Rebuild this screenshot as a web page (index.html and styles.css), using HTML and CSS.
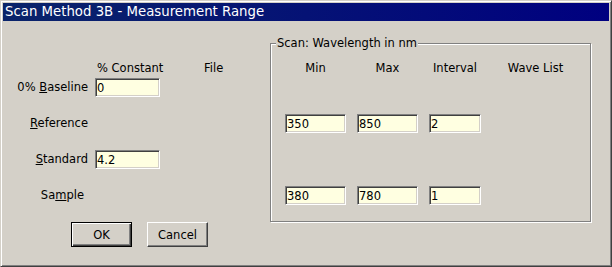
FILE: index.html
```html
<!DOCTYPE html>
<html>
<head>
<meta charset="utf-8">
<link rel="stylesheet" href="styles.css">
</head>
<body>
<div class="window">
  <div class="titlebar">Scan Method 3B - Measurement Range</div>
  <div class="content">
    <div class="left">
      <div class="grid">
        <div class="hdr hdr-const">% Constant</div>
        <div class="hdr hdr-file">File</div>

        <div class="lbl"><span>0% <u>B</u>aseline</span></div>
        <div class="cell"><input class="field w65" type="text" value="0"></div>
        <div class="cell"></div>

        <div class="lbl"><span><u>R</u>eference</span></div>
        <div class="cell"></div>
        <div class="cell"></div>

        <div class="lbl"><span><u>S</u>tandard</span></div>
        <div class="cell"><input class="field w65" type="text" value="4.2"></div>
        <div class="cell"></div>

        <div class="lbl lbl-sample"><span>Sa<u>m</u>ple</span></div>
        <div class="cell"></div>
        <div class="cell"></div>
      </div>
      <div class="buttons">
        <button class="btn btn-default">OK</button>
        <button class="btn">Cancel</button>
      </div>
    </div>
    <fieldset class="group">
      <legend>Scan: Wavelength in nm</legend>
      <div class="ggrid">
        <div class="ghdr">Min</div>
        <div class="ghdr">Max</div>
        <div class="ghdr">Interval</div>
        <div class="ghdr">Wave List</div>

        <div class="gcell"></div><div class="gcell"></div><div class="gcell"></div><div class="gcell"></div>

        <div class="gcell"><input class="field" type="text" value="350"></div>
        <div class="gcell"><input class="field" type="text" value="850"></div>
        <div class="gcell"><input class="field" type="text" value="2"></div>
        <div class="gcell"></div>

        <div class="gcell"></div><div class="gcell"></div><div class="gcell"></div><div class="gcell"></div>

        <div class="gcell"><input class="field" type="text" value="380"></div>
        <div class="gcell"><input class="field" type="text" value="780"></div>
        <div class="gcell"><input class="field" type="text" value="1"></div>
        <div class="gcell"></div>
      </div>
    </fieldset>
  </div>
</div>
</body>
</html>
```

FILE: styles.css
```css
* { box-sizing: border-box; }

html, body {
  margin: 0;
  padding: 0;
  background: #d4d0c8;
}

body {
  font-family: "DejaVu Sans", Verdana, sans-serif;
  font-size: 11.5px;
  color: #000;
}

.window {
  width: 612px;
  height: 267px;
  background: #d4d0c8;
  border: 1px solid;
  border-color: #d4d0c8 #404040 #404040 #d4d0c8;
  box-shadow: inset 1px 1px 0 #fff, inset -1px -1px 0 #808080;
  padding: 2px;
  display: flex;
  flex-direction: column;
}

.titlebar {
  height: 18px;
  line-height: 18px;
  padding-left: 2px;
  color: #fff;
  font-size: 13.3px;
  background: linear-gradient(to right, #0a246a, #000080);
  white-space: nowrap;
}

.content {
  display: flex;
  flex-direction: row;
  align-items: flex-start;
}

.left {
  width: 267px;
  padding-top: 37px;
  display: flex;
  flex-direction: column;
}

.grid {
  display: grid;
  grid-template-columns: 92px 65px 110px;
  grid-template-rows: 20px 36px 36px 36px 36px;
}

.hdr {
  line-height: 20px;
  white-space: nowrap;
}

.hdr-const { grid-column: 2; padding-left: 2px; }
.hdr-file { grid-column: 3; padding-left: 44px; }

.lbl {
  text-align: right;
  padding-right: 7px;
  line-height: 19px;
  white-space: nowrap;
}

.lbl-sample { padding-right: 11px; }

u { text-decoration: underline; text-underline-offset: 1px; }

.field {
  display: block;
  width: 100%;
  height: 19px;
  margin: 0;
  padding: 0 1px;
  border: 1px solid;
  border-color: #808080 #fff #fff #808080;
  box-shadow: inset 1px 1px 0 #404040, inset -1px -1px 0 #d4d0c8;
  background: #ffffe1;
  font-family: "DejaVu Sans", Verdana, sans-serif;
  font-size: 11.5px;
  color: #000;
  outline: none;
  -webkit-appearance: none;
  appearance: none;
  border-radius: 0;
}

.w65 { width: 65px; }

.buttons {
  display: flex;
  gap: 15px;
  padding-left: 68px;
}

.btn {
  width: 61px;
  height: 25px;
  margin: 0;
  padding: 0;
  font-family: "DejaVu Sans", Verdana, sans-serif;
  font-size: 11.5px;
  color: #000;
  background: #d4d0c8;
  border: 1px solid;
  border-color: #fff #404040 #404040 #fff;
  box-shadow: inset -1px -1px 0 #808080, inset 1px 1px 0 #d4d0c8;
  border-radius: 0;
  -webkit-appearance: none;
  appearance: none;
}

.btn-default {
  border-color: #000;
  box-shadow: inset 1px 1px 0 #fff, inset -1px -1px 0 #404040, inset -2px -2px 0 #808080;
}

.group {
  width: 321px;
  margin: 16px 0 0 0;
  padding: 8px 0 16px 14px;
  border: 1px solid #808080;
  box-shadow: inset 1px 1px 0 #fff, 1px 1px 0 #fff;
  min-inline-size: 0;
}

.group legend {
  margin-left: -9px;
  padding: 0 1px;
  line-height: 13px;
  background: #d4d0c8;
  white-space: nowrap;
}

.ggrid {
  display: grid;
  grid-template-columns: 61px 61px 52px 87px;
  column-gap: 11px;
  grid-template-rows: 20px 36px 36px 36px 19px;
}

.ghdr {
  text-align: center;
  line-height: 20px;
  white-space: nowrap;
}
```
